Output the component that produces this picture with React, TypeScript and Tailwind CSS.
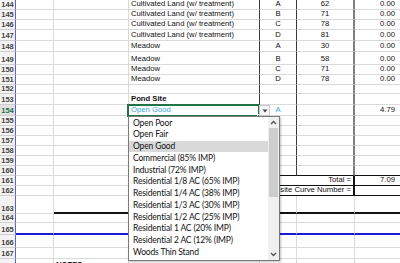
import React from "react";

type Kind = "main" | "total" | "lower";
interface RowDef {
  n: number;
  h: string;
  kind: Kind;
  b?: string;
  c?: string;
  d?: string;
  e?: string;
  f?: string;
  cBold?: boolean;
  blue?: boolean;
  blackBottom?: boolean;
  thickBottom?: boolean;
  blueBottom?: boolean;
  selected?: boolean;
}

const rows: RowDef[] = [
  { n: 144, h: "h-[10px]", kind: "main", c: "Cultivated Land (w/ treatment)", d: "A", e: "62", f: "0.00" },
  { n: 145, h: "h-[10px]", kind: "main", c: "Cultivated Land (w/ treatment)", d: "B", e: "71", f: "0.00" },
  { n: 146, h: "h-[10px]", kind: "main", c: "Cultivated Land (w/ treatment)", d: "C", e: "78", f: "0.00" },
  { n: 147, h: "h-[11px]", kind: "main", c: "Cultivated Land (w/ treatment)", d: "D", e: "81", f: "0.00" },
  { n: 148, h: "h-[11px]", kind: "main", c: "Meadow", d: "A", e: "30", f: "0.00" },
  { n: 149, h: "h-[13px]", kind: "main", c: "Meadow", d: "B", e: "58", f: "0.00" },
  { n: 150, h: "h-[10px]", kind: "main", c: "Meadow", d: "C", e: "71", f: "0.00" },
  { n: 151, h: "h-[10px]", kind: "main", c: "Meadow", d: "D", e: "78", f: "0.00" },
  { n: 152, h: "h-[9px]", kind: "main" },
  { n: 153, h: "h-[11px]", kind: "main", c: "Pond Site", cBold: true },
  { n: 154, h: "h-[11px]", kind: "main", c: "Open Good", d: "A", f: "4.79", blue: true, selected: true },
  { n: 155, h: "h-[10px]", kind: "main" },
  { n: 156, h: "h-[10px]", kind: "main" },
  { n: 157, h: "h-[10px]", kind: "main" },
  { n: 158, h: "h-[10px]", kind: "main" },
  { n: 159, h: "h-[10px]", kind: "main" },
  { n: 160, h: "h-[10px]", kind: "main", blackBottom: true },
  { n: 161, h: "h-[10px]", kind: "total", c: "Total =", f: "7.09" },
  { n: 162, h: "h-[10px]", kind: "total", c: "Composite Curve Number =" },
  { n: 163, h: "h-[18px]", kind: "lower", thickBottom: true },
  { n: 164, h: "h-[9px]", kind: "lower" },
  { n: 165, h: "h-[12px]", kind: "lower", blueBottom: true },
  { n: 166, h: "h-[13px]", kind: "lower" },
  { n: 167, h: "h-[11px]", kind: "lower" },
  { n: 168, h: "h-[12px]", kind: "lower", b: "NOTES:" },
];

const items = [
  "Open Poor",
  "Open Fair",
  "Open Good",
  "Commercial (85% IMP)",
  "Industrial (72% IMP)",
  "Residential 1/8 AC (65% IMP)",
  "Residential 1/4 AC (38% IMP)",
  "Residential 1/3 AC (30% IMP)",
  "Residential 1/2 AC (25% IMP)",
  "Residential 1 AC (20% IMP)",
  "Residential 2 AC (12% (IMP)",
  "Woods Thin Stand",
];

function Row({ r }: { r: RowDef }) {
  const header = r.selected
    ? "w-[16px] shrink-0 flex items-end justify-center pb-[1px] bg-[#e1e1e1] text-[#217346] border-r border-r-[#5f5fd8] border-b border-b-[#cfcfcf] text-[7.5px] font-bold leading-none"
    : "w-[16px] shrink-0 flex items-end justify-center pb-[1px] bg-[#f3f3f3] text-[#444444] border-r border-r-[#5f5fd8] border-b border-b-[#cfcfcf] text-[7.5px] font-bold leading-none";

  const bottomLight = "border-b border-b-[#dadada]";
  let bottomAB = bottomLight;
  let bottomCF = bottomLight;
  if (r.blackBottom) bottomCF = "border-b border-b-[#111111]";
  if (r.kind === "total") bottomCF = "border-b border-b-[#111111]";
  if (r.thickBottom) {
    bottomCF = "border-b-2 border-b-[#111111]";
    bottomAB = bottomLight;
  }
  if (r.blueBottom) {
    bottomCF = "border-b-2 border-b-[#1a1ad6]";
    bottomAB = "border-b-2 border-b-[#1a1ad6]";
  }
  const bBottom = r.thickBottom ? "border-b-2 border-b-[#111111]" : bottomAB;

  const txt = r.blue ? "text-[#3aa5dc]" : "text-[#111111]";

  const rightC = r.kind === "main" ? "border-r border-r-[#3a3a3a]" : "border-r border-r-[#dadada]";
  const rightD = r.kind === "main" ? "border-r border-r-[#3a3a3a]" : "border-r border-r-[#dadada]";
  const rightE = r.kind === "main" ? "border-r-2 border-r-[#808080]" : "border-r border-r-[#dadada]";

  return (
    <div className={`flex ${r.h}`}>
      <div className={header}>{r.n}</div>
      <div className={`w-[38px] shrink-0 border-r border-r-[#dadada] ${bottomAB}`} />
      <div className={`w-[75px] shrink-0 border-r border-r-[#dadada] ${bBottom} flex items-end pl-[2px] pb-[1px] leading-none font-bold text-[#111111]`}>
        {r.b}
      </div>
      {r.kind === "total" ? (
        <div className={`w-[226px] shrink-0 border-r-2 border-r-[#111111] ${bottomCF} flex items-end justify-end pr-[2px] pb-[1px] leading-none text-[#111111] whitespace-nowrap`}>
          {r.c}
        </div>
      ) : (
        <>
          <div className={`w-[131px] shrink-0 ${rightC} ${bottomCF} flex items-end pl-[2px] pb-[1px] leading-none whitespace-nowrap ${txt} ${r.cBold ? "font-bold" : ""}`}>
            {r.c}
          </div>
          <div className={`w-[37px] shrink-0 ${rightD} ${bottomCF} flex items-end justify-center pb-[1px] leading-none ${txt}`}>
            {r.d}
          </div>
          <div className={`w-[58px] shrink-0 ${rightE} ${bottomCF} flex items-end justify-center pb-[1px] leading-none text-[#111111]`}>
            {r.e}
          </div>
        </>
      )}
      <div className={`flex-1 ${bottomCF} flex items-end justify-end pr-[5px] pb-[1px] leading-none text-[#111111]`}>
        {r.f}
      </div>
    </div>
  );
}

export default function App() {
  return (
    <div className="relative w-[400px] h-[263px] overflow-hidden bg-white font-['Liberation_Sans',Arial,sans-serif] text-[7.7px]">
      <div className="flex flex-col">
        {rows.map((r) => (
          <Row key={r.n} r={r} />
        ))}
      </div>

      {/* selected cell */}
      <div className="absolute left-[127px] top-[104px] w-[133px] h-[13px] border-2 border-[#217346]">
        <div className="absolute right-[-3px] bottom-[-3px] w-[4px] h-[4px] bg-[#217346] border border-white" />
      </div>

      {/* dropdown button */}
      <div className="absolute left-[259px] top-[105px] w-[11px] h-[11px] bg-[#f6f6f6] border border-[#c8c8c8] flex items-center justify-center">
        <svg width="6" height="4" viewBox="0 0 6 4">
          <polygon points="0.5,0.5 5.5,0.5 3,3.5" fill="#444444" />
        </svg>
      </div>

      {/* dropdown list */}
      <div className="absolute left-[128px] top-[116px] w-[152px] h-[145px] bg-white border border-[#7a7a7a] shadow-[1px_1px_2px_rgba(0,0,0,0.25)] flex font-['Lato',sans-serif] text-[8.5px] tracking-[-0.15px] text-[#111111]">
        <div className="flex-1 flex flex-col">
          {items.map((it, i) => (
            <div
              key={it}
              className={`h-[11.75px] shrink-0 flex items-center pl-[4px] whitespace-nowrap ${i === 2 ? "bg-[#d9d9d9]" : ""}`}
            >
              {it}
            </div>
          ))}
        </div>
        <div className="w-[11px] shrink-0 bg-[#f0f0f0] flex flex-col items-center">
          <div className="h-[11px] w-full flex items-center justify-center">
            <svg width="7" height="5" viewBox="0 0 7 5">
              <polyline points="1,4 3.5,1.5 6,4" fill="none" stroke="#555555" strokeWidth="1.3" />
            </svg>
          </div>
          <div className="w-[9px] h-[69px] bg-[#cdcdcd]" />
          <div className="flex-1" />
          <div className="h-[11px] w-full flex items-center justify-center">
            <svg width="7" height="5" viewBox="0 0 7 5">
              <polyline points="1,1 3.5,3.5 6,1" fill="none" stroke="#555555" strokeWidth="1.3" />
            </svg>
          </div>
        </div>
      </div>
    </div>
  );
}
